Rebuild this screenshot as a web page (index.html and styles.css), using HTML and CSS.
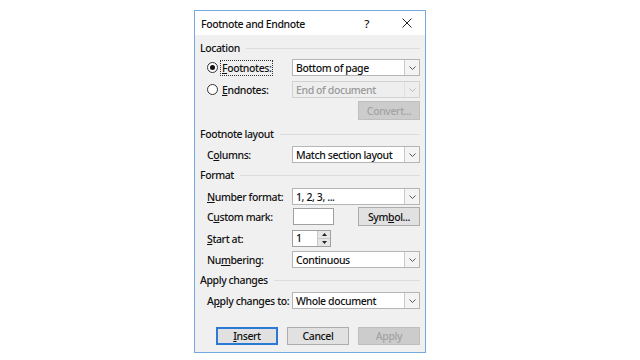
FILE: index.html
```html
<!DOCTYPE html>
<html lang="en">
  <head>
    <meta charset="UTF-8" />
    <meta name="viewport" content="width=device-width, initial-scale=1.0" />
    <title>Footnote and Endnote</title>
    <link rel="stylesheet" href="styles.css">
  </head>
  <body>
    <div class="dialog">
      <div class="titlebar">
        <span class="title">Footnote and Endnote</span>
        <span class="help">?</span>
        <svg class="close" width="10" height="10" viewBox="0 0 10 10">
          <path d="M0.5 0.5 L9.5 9.5 M9.5 0.5 L0.5 9.5" stroke="#222" stroke-width="1" fill="none" />
        </svg>
      </div>
      <div class="content">
        <div class="group">Location<span class="rule"></span></div>
        <div class="row r-foot">
          <label class="radio"><span class="dot checked"></span><span class="focus"><u>F</u>ootnotes:</span></label>
          <div class="combo"><span>Bottom of page</span><span class="drop"><svg width="7" height="4" viewBox="0 0 7 4"><path d="M0.5 0.5 L3.5 3.5 L6.5 0.5" stroke="#555" fill="none" /></svg></span></div>
        </div>
        <div class="row r-end">
          <label class="radio"><span class="dot"></span><span><u>E</u>ndnotes:</span></label>
          <div class="combo disabled"><span>End of document</span><span class="drop"><svg width="7" height="4" viewBox="0 0 7 4"><path d="M0.5 0.5 L3.5 3.5 L6.5 0.5" stroke="#bbb" fill="none" /></svg></span></div>
        </div>
        <div class="row r-conv">
          <span class="btn disabled">Con<u>v</u>ert...</span>
        </div>

        <div class="group g-layout">Footnote layout<span class="rule"></span></div>
        <div class="row r-cols">
          <span class="label">C<u>o</u>lumns:</span>
          <div class="combo"><span>Match section layout</span><span class="drop"><svg width="7" height="4" viewBox="0 0 7 4"><path d="M0.5 0.5 L3.5 3.5 L6.5 0.5" stroke="#555" fill="none" /></svg></span></div>
        </div>

        <div class="group g-format">Format<span class="rule"></span></div>
        <div class="row r-num">
          <span class="label"><u>N</u>umber format:</span>
          <div class="combo"><span>1, 2, 3, ...</span><span class="drop"><svg width="7" height="4" viewBox="0 0 7 4"><path d="M0.5 0.5 L3.5 3.5 L6.5 0.5" stroke="#555" fill="none" /></svg></span></div>
        </div>
        <div class="row r-mark">
          <span class="label">C<u>u</u>stom mark:</span>
          <div class="mark-box"><span class="field"></span><span class="btn">Sym<u>b</u>ol...</span></div>
        </div>
        <div class="row r-start">
          <span class="label"><u>S</u>tart at:</span>
          <div class="control">
            <div class="spin">
              <span class="spin-val">1</span>
              <span class="spin-btns">
                <span class="arrow"><svg width="5" height="3" viewBox="0 0 5 3"><path d="M0 3 L2.5 0 L5 3 Z" fill="#222" /></svg></span>
                <span class="arrow"><svg width="5" height="3" viewBox="0 0 5 3"><path d="M0 0 L2.5 3 L5 0 Z" fill="#222" /></svg></span>
              </span>
            </div>
          </div>
        </div>
        <div class="row r-numbering">
          <span class="label">Nu<u>m</u>bering:</span>
          <div class="combo"><span>Continuous</span><span class="drop"><svg width="7" height="4" viewBox="0 0 7 4"><path d="M0.5 0.5 L3.5 3.5 L6.5 0.5" stroke="#555" fill="none" /></svg></span></div>
        </div>

        <div class="group g-apply">Apply changes<span class="rule"></span></div>
        <div class="row r-apply">
          <span class="label">A<u>p</u>ply changes to:</span>
          <div class="combo"><span>Whole document</span><span class="drop"><svg width="7" height="4" viewBox="0 0 7 4"><path d="M0.5 0.5 L3.5 3.5 L6.5 0.5" stroke="#555" fill="none" /></svg></span></div>
        </div>

        <div class="buttons">
          <span class="btn default"><u>I</u>nsert</span>
          <span class="btn">Cancel</span>
          <span class="btn disabled">Apply</span>
        </div>
      </div>
    </div>
  </body>
</html>
```

FILE: styles.css
```css
body {
  margin: 0;
  background: #fff;
  font-family: "Noto Sans", "Open Sans", sans-serif;
  font-size: 10.5px;
  font-weight: 500;
  letter-spacing: -0.4px;
  color: #111;
  white-space: nowrap;
}
u {
  text-decoration: underline;
  text-underline-offset: 1px;
}
.dialog {
  margin: 10px 0 0 194px;
  width: 230px;
  height: 341px;
  border: 1px solid #76aadf;
  background: #f0f0f0;
}
.titlebar {
  height: 24px;
  background: #fff;
  display: flex;
  align-items: center;
  padding-left: 6px;
}
.title {
  flex: 1;
  font-size: 10.5px;
  padding-top: 1px;
}
.help {
  font-size: 11.5px;
  margin-right: 33px;
}
.close {
  margin-right: 13px;
}
.content {
  padding: 5px 5px 0 5px;
}
.group {
  height: 16px;
  display: flex;
  align-items: center;
}
.rule {
  flex: 1;
  height: 1px;
  background: #dcdcdc;
  margin-left: 6px;
}
.row {
  height: 17px;
  display: flex;
  align-items: center;
  padding-left: 7px;
}
.label,
.radio {
  flex: 1;
  display: flex;
  align-items: center;
}
.dot {
  width: 9px;
  height: 9px;
  border: 1px solid #333;
  border-radius: 50%;
  background: #fff;
  margin-right: 4px;
  display: flex;
  align-items: center;
  justify-content: center;
}
.dot.checked::after {
  content: "";
  width: 5px;
  height: 5px;
  border-radius: 50%;
  background: #111;
}
.focus {
  outline: 1px dotted #333;
  outline-offset: 0;
  padding: 0 1px;
  margin-left: -1px;
}
.combo {
  width: 126px;
  height: 15px;
  border: 1px solid #b5b5b5;
  background: #fff;
  display: flex;
  align-items: center;
}
.combo > span:first-child {
  flex: 1;
  padding-left: 3px;
}
.drop {
  width: 14px;
  height: 15px;
  border-left: 1px solid #c8c8c8;
  background: #f4f4f4;
  display: flex;
  align-items: center;
  justify-content: center;
}
.combo.disabled {
  background: #eeeeee;
  border-color: #d2d2d2;
  color: #999;
}
.combo.disabled .drop {
  background: #eeeeee;
  border-left-color: #e0e0e0;
}
.btn {
  width: 60px;
  height: 17px;
  border: 1px solid #adadad;
  background: #e1e1e1;
  display: flex;
  align-items: center;
  justify-content: center;
}
.btn.disabled {
  background: #cccccc;
  border-color: #bfbfbf;
  color: #a3a3a3;
}
.btn.disabled u {
  text-decoration: none;
}
.btn.default {
  border: 1px solid #2a7ad5;
  box-shadow: inset 0 0 0 1px #2a7ad5;
}
.r-foot { margin-top: 3px; }
.r-end { margin-top: 5px; }
.r-conv {
  margin-top: 3px;
  height: 19px;
  justify-content: flex-end;
}
.r-conv .btn { height: 17px; }
.g-layout { margin-top: 6px; }
.r-cols { margin-top: 4px; }
.g-format { margin-top: 4px; }
.r-num { margin-top: 5px; }
.r-mark { margin-top: 3px; }
.r-start { margin-top: 5px; }
.r-numbering { margin-top: 4px; }
.g-apply { margin-top: 4px; }
.r-apply { margin-top: 4px; }
.mark-box,
.control {
  width: 128px;
  display: flex;
  align-items: center;
}
.mark-box {
  justify-content: space-between;
}
.field {
  width: 39px;
  height: 15px;
  border: 1px solid #a0a0a0;
  background: #fff;
  margin-left: 1px;
}
.spin {
  width: 37px;
  height: 15px;
  border: 1px solid #a0a0a0;
  background: #fff;
  display: flex;
}
.spin-val {
  flex: 1;
  padding-left: 3px;
  line-height: 15px;
}
.spin-btns {
  width: 12px;
  display: flex;
  flex-direction: column;
  border-left: 1px solid #c8c8c8;
}
.arrow {
  flex: 1;
  background: #e6e6e6;
  display: flex;
  align-items: center;
  justify-content: center;
}
.arrow + .arrow {
  border-top: 1px solid #c8c8c8;
}
.buttons {
  margin-top: 18px;
  display: flex;
  justify-content: flex-end;
  gap: 9px;
}
.buttons .btn {
  height: 16px;
}
```
